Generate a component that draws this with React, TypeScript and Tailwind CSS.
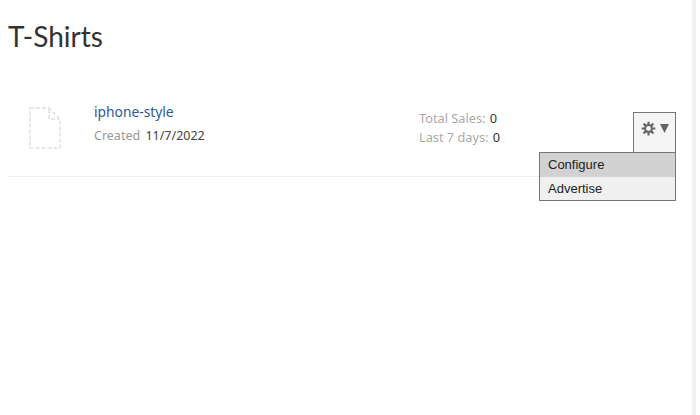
function FileIcon() {
  return (
    <svg width="34" height="44" viewBox="0 0 34 44" fill="none" stroke="#e0e0e0" strokeWidth="1.5" strokeDasharray="4 2">
      <path d="M2 2 H21 L32 13 V42 H2 Z" />
      <path d="M21 3 V13 H31" />
    </svg>
  );
}

function Gear() {
  return (
    <svg width="15" height="15" viewBox="0 0 24 24" fill="none" stroke="#666" aria-hidden>
      <circle cx="12" cy="12" r="5.5" strokeWidth="3.2" />
      <g strokeWidth="3.4">
        <path d="M12 1v5M12 18v5M1 12h5M18 12h5" />
        <path d="M4.2 4.2l3.6 3.6M16.2 16.2l3.6 3.6M4.2 19.8l3.6-3.6M16.2 7.8l3.6-3.6" />
      </g>
    </svg>
  );
}

export default function App() {
  return (
    <div className="h-[415px] w-[700px] overflow-hidden bg-white flex font-['Noto_Sans',sans-serif]">
      <div className="w-[692px] shrink-0 pl-2 pr-4">
        <h1 className="pt-[17px] text-[28px] leading-[38px] text-[#333] font-['Lato',sans-serif]">T-Shirts</h1>

        <div className="mt-[35px] h-[87px] border-b border-[#eeeeee] flex items-start relative">
          <div className="ml-[20px] mt-[16px] w-[66px] shrink-0">
            <FileIcon />
          </div>
          <div className="w-[325px] shrink-0 mt-[12px]">
            <a className="block text-[13.8px] leading-[20px] text-[#2d5a94]">iphone-style</a>
            <p className="mt-[4px] text-[12.5px] leading-[20px] text-[#999]">
              Created <span className="ml-[2px] text-[#444]">11/7/2022</span>
            </p>
          </div>
          <div className="mt-[19px] text-[12.75px] leading-[19px] text-[#aaa]">
            <p>Total Sales: <span className="ml-[1px] text-[#333]">0</span></p>
            <p>Last 7 days: <span className="ml-[1px] text-[#333]">0</span></p>
          </div>

          {/* menu open over the row */}
          <div className="absolute right-0 top-[22px] w-[137px] flex flex-col items-end">
            <div className="h-[40px] w-[43px] border border-b-0 border-[#777] bg-[#f5f5f5] flex items-start justify-center gap-[4px] pt-[8px]">
              <Gear />
              <svg width="9" height="9" viewBox="0 0 9 9" className="mt-[3px]" aria-hidden>
                <path d="M0 0h9L4.5 9z" fill="#666" />
              </svg>
            </div>
            <div className="w-full border border-[#777] bg-[#f0f0f0] text-[13px] text-[#222] font-['Liberation_Sans',sans-serif]">
              <div className="h-[24px] bg-[#d2d2d2] pl-[8px] leading-[24px]">Configure</div>
              <div className="h-[23px] pl-[8px] leading-[24px]">Advertise</div>
            </div>
          </div>
        </div>
      </div>
      <div className="w-[4px] shrink-0 bg-[#f0f0f0]" />
    </div>
  );
}
